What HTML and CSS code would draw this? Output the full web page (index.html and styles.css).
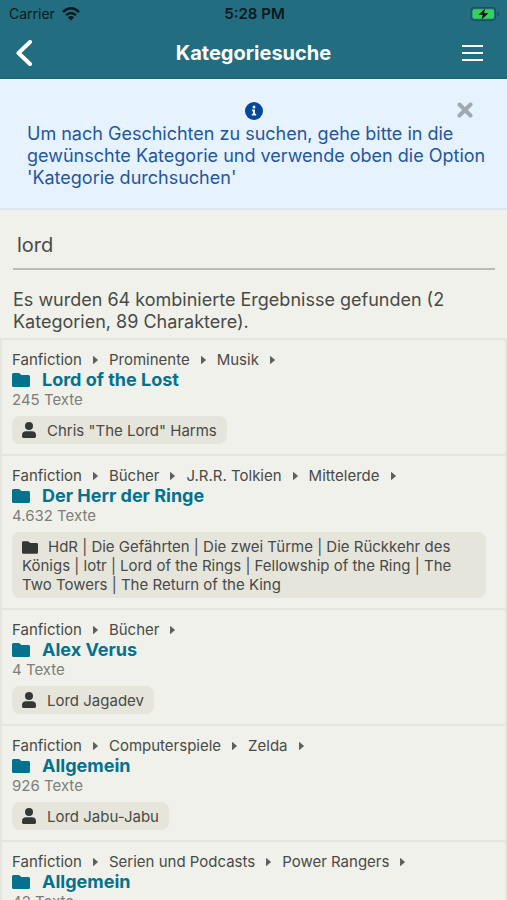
FILE: index.html
```html
<!DOCTYPE html>
<html lang="de">
<head>
<meta charset="utf-8">
<meta name="viewport" content="width=device-width, initial-scale=1">
<title>Kategoriesuche</title>
<link rel="stylesheet" href="styles.css">
</head>
<body>
<svg class="defs" aria-hidden="true">
  <symbol id="folder" viewBox="0 0 18 14"><path d="M1.500 0h5.200q.7 0 1.100.5L9.200 2h7.300Q18 2 18 3.500v9q0 1.500-1.500 1.500h-15Q0 14 0 12.500v-11Q0 0 1.500 0z"/></symbol>
  <symbol id="person" viewBox="0 0 14 16"><circle cx="7" cy="4" r="4"/><path d="M4.200 9.200h5.600Q14 9.200 14 13.400v1.200Q14 16 12.600 16H1.400Q0 16 0 14.600v-1.200Q0 9.200 4.200 9.200z"/></symbol>
  <symbol id="caret" viewBox="0 0 5 8"><path d="M0 0.300v7.400q0 .4.400.2L4.800 4.300q.3-.3 0-.6L.4.100Q0-.1 0 .3z"/></symbol>
</svg>
<div class="app">
  <header class="top">
    <div class="status">
      <div class="carrier">Carrier
        <svg class="wifi" viewBox="0 0 18 14" aria-hidden="true"><g fill="none" stroke="currentColor" stroke-width="2.400"><path d="M1 5Q9-2.400 17 5"/><path d="M4 8.200Q9 3.800 14 8.200"/></g><path d="M5.900 10.200Q9 7.800 12.100 10.200L9 13.500z"/></svg>
      </div>
      <time class="clock">5:28 PM</time>
      <svg class="battery" viewBox="0 0 30 14" aria-hidden="true"><rect x="1" y=".7" width="24.500" height="12.600" rx="3.500" fill="none" stroke="#185060" stroke-width="1.200"/><rect x="2.500" y="2.200" width="21.500" height="9.600" rx="2" fill="#35d158"/><path d="M27.500 4.800q2 .8 2 2.200t-2 2.200z" fill="#185060"/><path d="M15.200 1.500L8.500 7.800h4.300L11.500 12.500l7-6.200h-4.400z" fill="#06140c"/></svg>
    </div>
    <div class="nav">
      <button class="icon-button" type="button" aria-label="Zurück"><svg class="back" viewBox="0 0 16 26" aria-hidden="true"><path d="M14 2L2.500 13 14 24"/></svg></button>
      <h1 class="heading">Kategoriesuche</h1>
      <button class="icon-button icon-button-end" type="button" aria-label="Menü"><svg class="menu" viewBox="0 0 21 16" aria-hidden="true"><path d="M0 1h21M0 8h21M0 15h21"/></svg></button>
    </div>
  </header>
  <main class="content">
    <section class="notice">
      <svg class="info" viewBox="0 0 18 18" aria-hidden="true"><circle cx="9" cy="9" r="9" fill="#04479b"/><circle cx="9" cy="5" r="1.500" fill="#e7f2ff"/><path d="M7 7.500h3v4.300h1.200v1.700H6.800v-1.700H8V9.200H7z" fill="#e7f2ff"/></svg>
      <p class="notice-text">Um nach Geschichten zu suchen, gehe bitte in die gewünschte Kategorie und verwende oben die Option 'Kategorie durchsuchen'</p>
      <button class="close" type="button" aria-label="Schließen"><svg class="cross" viewBox="0 0 16 16" aria-hidden="true"><path d="M2.500 2.500l11 11M13.500 2.500l-11 11"/></svg></button>
    </section>
    <form class="search"><input class="field" type="text" value="lord" aria-label="Suchbegriff"></form>
    <p class="summary">Es wurden 64 kombinierte Ergebnisse gefunden (2 Kategorien, 89 Charaktere).</p>
    <ul class="results">
      <li class="item">
        <div class="crumbs"><span>Fanfiction</span><svg class="caret"><use href="#caret"/></svg><span>Prominente</span><svg class="caret"><use href="#caret"/></svg><span>Musik</span><svg class="caret"><use href="#caret"/></svg></div>
        <a class="title" href="#"><svg class="folder"><use href="#folder"/></svg>Lord of the Lost</a>
        <p class="count">245 Texte</p>
        <p class="chip"><svg class="person"><use href="#person"/></svg>Chris "The Lord" Harms</p>
      </li>
      <li class="item">
        <div class="crumbs"><span>Fanfiction</span><svg class="caret"><use href="#caret"/></svg><span>Bücher</span><svg class="caret"><use href="#caret"/></svg><span>J.R.R. Tolkien</span><svg class="caret"><use href="#caret"/></svg><span>Mittelerde</span><svg class="caret"><use href="#caret"/></svg></div>
        <a class="title" href="#"><svg class="folder"><use href="#folder"/></svg>Der Herr der Ringe</a>
        <p class="count">4.632 Texte</p>
        <p class="chip"><svg class="alias"><use href="#folder"/></svg>HdR | Die Gefährten | Die zwei Türme | Die Rückkehr des Königs | lotr | Lord of the Rings | Fellowship of the Ring | The Two Towers | The Return of the King</p>
      </li>
      <li class="item">
        <div class="crumbs"><span>Fanfiction</span><svg class="caret"><use href="#caret"/></svg><span>Bücher</span><svg class="caret"><use href="#caret"/></svg></div>
        <a class="title" href="#"><svg class="folder"><use href="#folder"/></svg>Alex Verus</a>
        <p class="count">4 Texte</p>
        <p class="chip"><svg class="person"><use href="#person"/></svg>Lord Jagadev</p>
      </li>
      <li class="item">
        <div class="crumbs"><span>Fanfiction</span><svg class="caret"><use href="#caret"/></svg><span>Computerspiele</span><svg class="caret"><use href="#caret"/></svg><span>Zelda</span><svg class="caret"><use href="#caret"/></svg></div>
        <a class="title" href="#"><svg class="folder"><use href="#folder"/></svg>Allgemein</a>
        <p class="count">926 Texte</p>
        <p class="chip"><svg class="person"><use href="#person"/></svg>Lord Jabu-Jabu</p>
      </li>
      <li class="item">
        <div class="crumbs"><span>Fanfiction</span><svg class="caret"><use href="#caret"/></svg><span>Serien und Podcasts</span><svg class="caret"><use href="#caret"/></svg><span>Power Rangers</span><svg class="caret"><use href="#caret"/></svg></div>
        <a class="title" href="#"><svg class="folder"><use href="#folder"/></svg>Allgemein</a>
        <p class="count">42 Texte</p>
      </li>
    </ul>
  </main>
</div>
</body>
</html>
```
FILE: styles.css
```css
* { box-sizing: border-box; }
body, h1, p, ul { margin: 0; padding: 0; }
body {
  font-family: Inter, "Liberation Sans", sans-serif;
  background: #f0f1ea;
  color: #484a47;
}
button { padding: 0; border: 0; background: none; cursor: pointer; }
svg { display: block; flex: none; }
.defs { display: none; }
.app { display: flex; flex-direction: column; height: 100vh; }
.top { flex: none; background: #236d80; border-bottom: 1px solid #1c6276; }
.status {
  display: grid;
  grid-template-columns: 1fr auto 1fr;
  align-items: center;
  height: 27px;
  padding: 0 7px 0 9px;
  font-size: 14px;
  color: #08191f;
}
.carrier { display: flex; align-items: center; gap: 7px; }
.wifi { width: 18px; height: 14px; fill: currentColor; }
.clock { font-size: 15px; font-weight: 600; }
.battery { width: 30px; height: 14px; justify-self: end; }
.nav {
  display: grid;
  grid-template-columns: 1fr auto 1fr;
  align-items: center;
  height: 51px;
  padding: 0 16px;
  color: #fff;
}
.icon-button { display: flex; justify-self: start; color: inherit; }
.icon-button-end { justify-self: end; padding-right: 8px; }
.heading { font-size: 20px; line-height: 24px; font-weight: 700; }
.back { width: 16px; height: 26px; fill: none; stroke: currentColor; stroke-width: 4; stroke-linecap: round; stroke-linejoin: round; }
.menu { width: 21px; height: 16px; stroke: currentColor; stroke-width: 2; }
.content { flex: 1; min-height: 0; overflow-y: auto; scrollbar-width: none; }
.notice {
  position: relative;
  padding: 23px 20px 19px;
  background: #e7f2ff;
  border-bottom: 2px solid #dfe6f1;
  color: #1f579c;
}
.info { width: 18px; height: 18px; margin: 0 auto 3px; }
.notice-text { padding-left: 7px; font-size: 18px; line-height: 22px; }
.close { position: absolute; top: 23px; right: 34px; }
.cross { width: 16px; height: 16px; stroke: #a0a8b0; stroke-width: 4; stroke-linecap: round; }
.search { padding: 11px 12px 19px 13px; }
.field {
  display: block;
  width: 100%;
  height: 49px;
  padding: 0 4px;
  border: 0;
  border-bottom: 2px solid #b9bdb3;
  border-radius: 0;
  outline: 0;
  background: none;
  color: inherit;
  font: 20px Inter, "Liberation Sans", sans-serif;
}
.summary { padding: 0 13px 5px; font-size: 18px; line-height: 22px; }
.results { list-style: none; border: solid #e5e6de; border-width: 0 2px; }
.item { padding: 10px 19px 10px 10px; border-top: 2px solid #e5e6de; }
.crumbs { display: flex; align-items: center; gap: 11px; font-size: 15px; line-height: 20px; }
.caret { width: 5px; height: 8px; fill: #5d605c; }
.title {
  display: flex;
  align-items: center;
  gap: 12px;
  font-size: 18px;
  line-height: 20px;
  font-weight: 700;
  color: #04718f;
  text-decoration: none;
}
.folder { width: 18px; height: 14px; fill: #04718f; }
.count { font-size: 15px; line-height: 20px; color: #7c7e7a; }
.chip {
  width: fit-content;
  margin-top: 6px;
  padding: 5px 10px 4px;
  border-radius: 8px;
  background: #e5e5dc;
  font-size: 15px;
  line-height: 19px;
}
.chip svg { display: inline-block; vertical-align: -2px; fill: #353735; }
.person { width: 14px; height: 16px; margin-right: 11px; }
.alias { width: 16px; height: 13px; margin-right: 10px; }
```
